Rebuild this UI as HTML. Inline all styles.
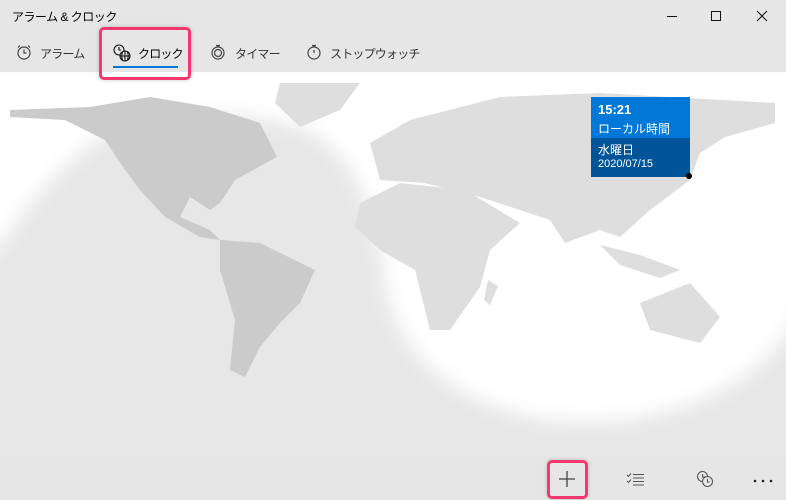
<!DOCTYPE html>
<html><head><meta charset="utf-8"><style>
body{margin:0;width:786px;height:500px;overflow:hidden;background:#e6e6e6;font-family:"Liberation Sans","Noto Sans CJK JP",sans-serif;position:relative}
.a{position:absolute}
.t{font-size:12px;color:#333;letter-spacing:-0.8px}
</style></head><body>
<div class="a" style="left:12px;top:8px;font-size:12px;color:#000;letter-spacing:-0.5px">アラーム &amp; クロック</div>
<svg class="a" style="left:660px;top:6px" width="120" height="20" stroke="#111" fill="none" stroke-width="1">
<line x1="7" y1="10.5" x2="17" y2="10.5"/><rect x="51.5" y="5.5" width="9" height="9"/><line x1="97" y1="5" x2="107" y2="15"/><line x1="107" y1="5" x2="97" y2="15"/></svg>
<!-- map -->
<svg class="a" style="left:0;top:72px" width="786" height="386" viewBox="0 72 786 386">
<defs><filter id="b" x="-10%" y="-10%" width="120%" height="120%"><feGaussianBlur stdDeviation="9"/></filter></defs>
<rect x="0" y="72" width="786" height="386" fill="#e7e7e7"/>
<path filter="url(#b)" fill="#fff" d="M-20 60H806V280C800 360 700 425 580 422C470 420 400 360 386 290C380 230 360 150 300 128C250 110 150 110 100 140C50 170 20 220 -20 270Z"/>
<g fill="#cbcbcb">
<path d="M10 110L90 107L150 97L210 107L260 123L277 157L235 180L220 203L210 210L190 197L180 217L210 230L220 240L200 237L165 217L140 190L125 170L105 140L65 120L10 117Z"/>
<path d="M220 240L260 243L315 270L300 303L280 323L260 347L245 377L230 370L235 320L220 270Z"/>
</g>
<g fill="#dedede">
<path d="M280 83L360 83L340 110L300 127L275 103Z"/>
<path d="M370 143L410 120L500 97L600 93L775 103L775 123L725 137L700 153L690 180L650 210L620 237L600 230L565 243L550 220L520 210L480 197L425 183L380 180Z"/>
<path d="M360 203L400 183L465 190L520 223L490 250L480 287L450 330L430 330L415 270L380 250L355 227Z"/>
<path d="M640 303L690 283L720 317L700 343L650 330Z"/>
<path d="M600 245L640 255L680 270L660 278L620 265Z"/>
<path d="M488 280L498 286L490 305L484 300Z"/>
</g>
</svg>
<!-- tabs -->
<svg class="a" style="left:15px;top:43px" width="18" height="18" fill="none" stroke="#444" stroke-width="1.2"><circle cx="9" cy="10" r="6"/><path d="M9 6.5V10H11.5M3 4.5L5 2.5M15 4.5L13 2.5"/></svg>
<div class="a t" style="left:40px;top:45px">アラーム</div>
<svg class="a" style="left:112px;top:43px" width="20" height="20" fill="none" stroke="#111" stroke-width="1.1"><circle cx="7" cy="7" r="5"/><path d="M7 4V7H9"/><circle cx="13" cy="13" r="5" fill="#e6e6e6"/><path d="M8 13H18M13 8V18M10.5 9C9.5 12 9.5 14 10.5 17M15.5 9C16.5 12 16.5 14 15.5 17"/></svg>
<div class="a t" style="left:138px;top:45px;color:#000">クロック</div>
<div class="a" style="left:113px;top:66px;width:65px;height:2px;background:#0078d7"></div>
<div class="a" style="left:99px;top:27px;width:86px;height:47px;border:3px solid #f2386e;border-radius:5px;box-shadow:0 0 4px rgba(0,0,0,.2);z-index:5"></div>
<svg class="a" style="left:209px;top:43px" width="18" height="18" fill="none" stroke="#444" stroke-width="1.2"><circle cx="9" cy="10" r="6"/><circle cx="9" cy="10" r="3.5"/><path d="M7 2.5H11M9 2.5V4"/></svg>
<div class="a t" style="left:235px;top:45px">タイマー</div>
<svg class="a" style="left:305px;top:43px" width="18" height="18" fill="none" stroke="#444" stroke-width="1.2"><circle cx="9" cy="10" r="6"/><path d="M7 2.5H11M9 2.5V4M9 10V7"/></svg>
<div class="a t" style="left:330px;top:45px">ストップウォッチ</div>
<div class="a" style="left:591px;top:97px;width:99px;height:41px;background:#0078d7;color:#fff">
<div style="position:absolute;left:7px;top:5px;font-size:13px;font-weight:bold">15:21</div>
<div style="position:absolute;left:7px;top:23px;font-size:12px">ローカル時間</div></div>
<div class="a" style="left:591px;top:138px;width:99px;height:39px;background:#00549a;color:#fff">
<div style="position:absolute;left:7px;top:3px;font-size:12px">水曜日</div>
<div style="position:absolute;left:7px;top:20px;font-size:11px">2020/07/15</div></div>
<div class="a" style="left:686px;top:173px;width:6px;height:6px;border-radius:50%;background:#000"></div>
<!-- bottom bar -->
<div class="a" style="left:0;top:458px;width:786px;height:42px;background:#e6e6e6"></div>
<div class="a" style="left:547px;top:460px;width:35px;height:33px;border:3px solid #f2386e;border-radius:5px;box-shadow:0 0 4px rgba(0,0,0,.2)"></div>
<svg class="a" style="left:558px;top:470px" width="18" height="18" stroke="#444" stroke-width="1.3"><path d="M9 1V17M1 9H17"/></svg>
<svg class="a" style="left:626px;top:472px" width="20" height="14" fill="none" stroke="#555" stroke-width="1"><path d="M1 3L2.5 4.5L5 1.5M1 9L2.5 10.5L5 7.5M7 2.5H18M7 6H18M7 9.5H18M7 13H18"/></svg>
<svg class="a" style="left:696px;top:470px" width="18" height="18" fill="none" stroke="#555" stroke-width="1.1"><circle cx="6.5" cy="6.5" r="5"/><path d="M6.5 4V7H8.5"/><circle cx="11.5" cy="11.5" r="5" fill="#e6e6e6"/><path d="M11.5 9V12H13.5"/></svg>
<svg class="a" style="left:752px;top:478px" width="24" height="6" fill="#222"><circle cx="3" cy="3" r="1.3"/><circle cx="11" cy="3" r="1.3"/><circle cx="19" cy="3" r="1.3"/></svg>
</body></html>
